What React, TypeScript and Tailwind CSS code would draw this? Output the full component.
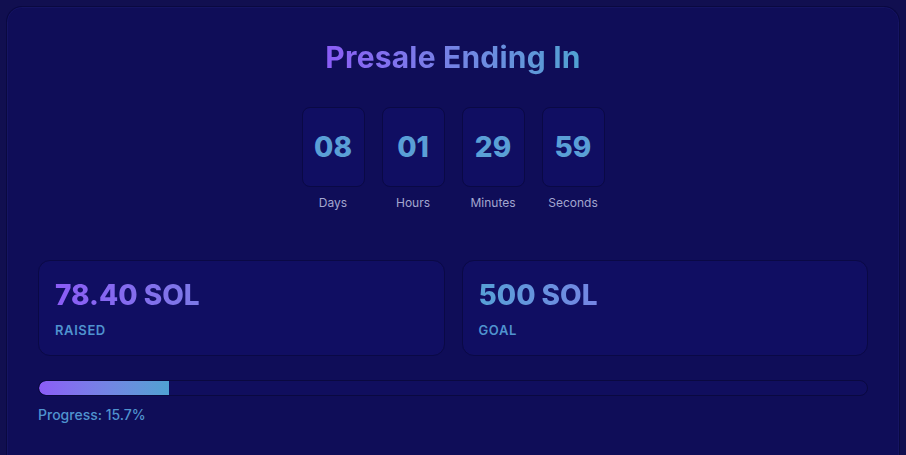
import React from "react";

const countdown = [
  { value: "08", label: "Days" },
  { value: "01", label: "Hours" },
  { value: "29", label: "Minutes" },
  { value: "59", label: "Seconds" },
];

const progress = 15.7;

export default function App() {
  return (
    <div
      className="min-h-screen bg-[#110f50] p-[6px] pb-0"
      style={{ fontFamily: "Inter, 'Noto Sans', sans-serif" }}
    >
      <div className="rounded-t-2xl border border-b-0 border-[#0a0940] bg-[#0f0d58] px-[31px] pt-8 pb-8 shadow-[inset_0_0_0_1px_rgba(60,60,160,0.15)]">
        <h2 className="text-center text-[30px] font-bold leading-9 tracking-[0.2px]">
          <span className="bg-gradient-to-r from-[#8b5cf6] to-[#4fa2d2] bg-clip-text text-transparent">
            Presale Ending In
          </span>
        </h2>

        <div className="mt-[32px] flex justify-center gap-[17px]">
          {countdown.map((item) => (
            <div key={item.label} className="flex flex-col items-center">
              <div className="flex h-[80px] w-[63px] items-center justify-center rounded-lg border border-[#0a0945] bg-[#100e62]">
                <span className="text-[28px] font-extrabold text-[#5a9fd6]">
                  {item.value}
                </span>
              </div>
              <span className="mt-2 text-[12px] leading-4 text-[#a3a6cf]">
                {item.label}
              </span>
            </div>
          ))}
        </div>

        <div className="mt-[49px] grid grid-cols-2 gap-[17px]">
          <div className="h-[96px] rounded-xl border border-[#0a0945] bg-[#100e62] px-4 pt-[16px]">
            <div className="text-[28px] font-extrabold leading-9">
              <span className="bg-gradient-to-r from-[#8b5cf6] to-[#7c79e6] bg-clip-text text-transparent">
                78.40 SOL
              </span>
            </div>
            <div className="mt-[8px] text-[13px] font-semibold tracking-[0.6px] text-[#4f93cf]">
              RAISED
            </div>
          </div>
          <div className="h-[96px] rounded-xl border border-[#0a0945] bg-[#100e62] px-4 pt-[16px]">
            <div className="text-[28px] font-extrabold leading-9">
              <span className="bg-gradient-to-r from-[#56a0d6] to-[#7485e4] bg-clip-text text-transparent">
                500 SOL
              </span>
            </div>
            <div className="mt-[8px] text-[13px] font-semibold tracking-[0.6px] text-[#4f93cf]">
              GOAL
            </div>
          </div>
        </div>

        <div className="mt-[24px] h-4 w-full overflow-hidden rounded-full border border-[#0a0940] bg-[#100e5e]">
          <div
            className="h-full rounded-l-full bg-gradient-to-r from-[#8b5cf6] to-[#4fa2d2]"
            style={{ width: `${progress}%` }}
          />
        </div>
        <div className="mt-[9px] text-[14px] font-medium leading-5 text-[#4f93cf]">
          Progress: {progress}%
        </div>
      </div>
    </div>
  );
}
